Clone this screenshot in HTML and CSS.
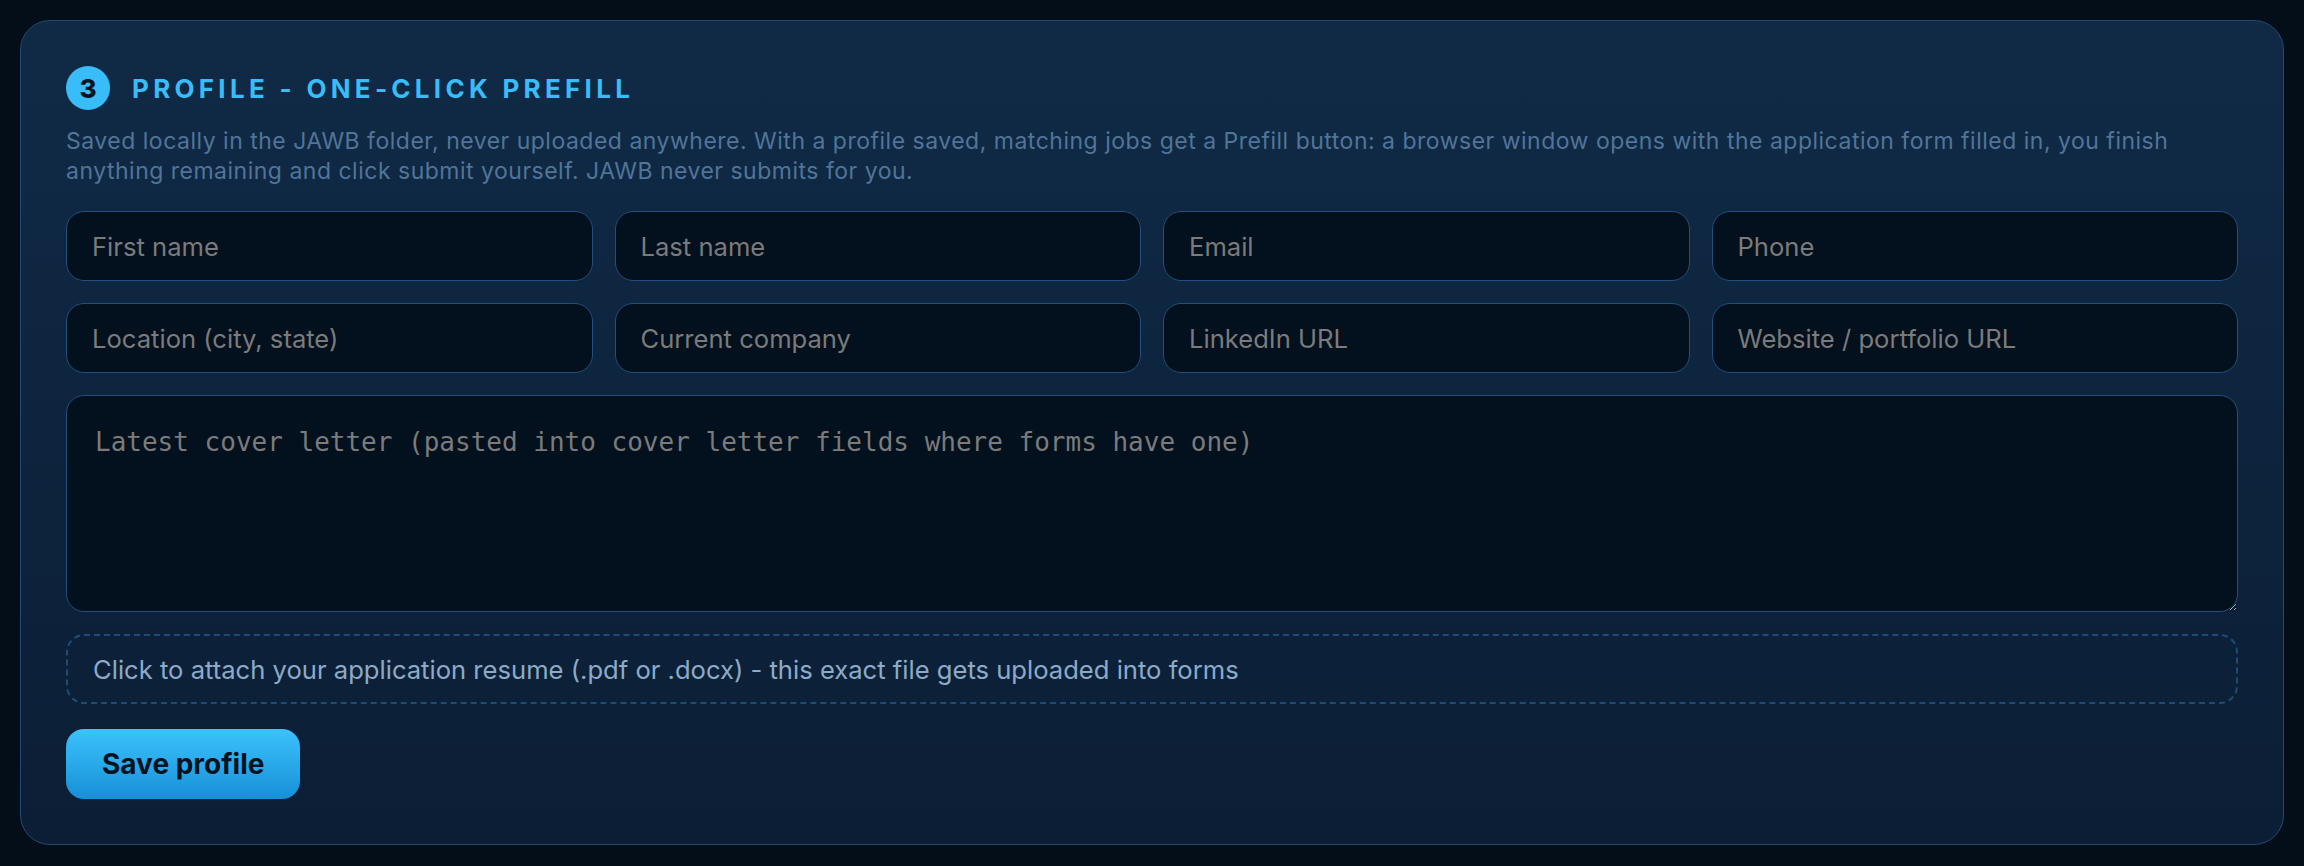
FILE: index.html
```html
<!DOCTYPE html>
<html lang="en">
<head>
    <meta charset="UTF-8">
    <meta name="viewport" content="width=device-width, initial-scale=1.0">
    <title>JAWB - Profile</title>
    <link rel="stylesheet" href="styles.css">
</head>
<body>
    <section class="card">
        <div class="card-head">
            <span class="step">3</span>
            <h2>Profile - one-click prefill</h2>
        </div>
        <p class="hint">Saved locally in the JAWB folder, never uploaded anywhere. With a profile saved, matching jobs get a Prefill button: a browser window opens with the application form filled in, you finish anything remaining and click submit yourself. JAWB never submits for you.</p>

        <form class="profile-form" onsubmit="return false;">
            <div class="fields">
                <input type="text" placeholder="First name">
                <input type="text" placeholder="Last name">
                <input type="email" placeholder="Email">
                <input type="tel" placeholder="Phone">
                <input type="text" placeholder="Location (city, state)">
                <input type="text" placeholder="Current company">
                <input type="url" placeholder="LinkedIn URL">
                <input type="url" placeholder="Website / portfolio URL">
            </div>
            <textarea placeholder="Latest cover letter (pasted into cover letter fields where forms have one)"></textarea>
            <label class="dropzone">
                <input type="file" accept=".pdf,.docx">
                Click to attach your application resume (.pdf or .docx) - this exact file gets uploaded into forms
            </label>
            <div class="actions">
                <button type="submit">Save profile</button>
            </div>
        </form>
    </section>
</body>
</html>
```

FILE: styles.css
```css
body {
    margin: 0;
    padding: 20px;
    background-color: #040e18;
    font-family: Inter, "Noto Sans", sans-serif;
}
.card {
    background: linear-gradient(180deg, #102a46 0%, #0b1e35 100%);
    border: 1px solid #214b75;
    border-radius: 30px;
    padding: 45px;
}
.card-head {
    display: flex;
    align-items: center;
    gap: 22px;
}
.step {
    width: 44px;
    height: 44px;
    border-radius: 50%;
    background-color: #38bdf8;
    color: #04121f;
    font-weight: 800;
    font-size: 26px;
    display: flex;
    align-items: center;
    justify-content: center;
}
.card-head h2 {
    margin: 0;
    color: #38bdf8;
    font-size: 26px;
    font-weight: 700;
    text-transform: uppercase;
    letter-spacing: 0.165em;
}
.hint {
    margin: 17px 0 25px;
    color: #517599;
    font-size: 23px;
    line-height: 29.5px;
    letter-spacing: 0.5px;
}
.profile-form {
    display: flex;
    flex-direction: column;
    gap: 22px;
}
.fields {
    display: grid;
    grid-template-columns: repeat(4, 1fr);
    gap: 22px;
}
input, textarea {
    box-sizing: border-box;
    background-color: #03101d;
    border: 1px solid #22507e;
    border-radius: 18px;
    color: #d0dbe6;
    outline: none;
}
input {
    height: 70px;
    padding: 0 25px;
    font-family: Inter, "Noto Sans", sans-serif;
    font-size: 25.6px;
}
textarea {
    height: 217px;
    padding: 26px 28px;
    font-family: "DejaVu Sans Mono", monospace;
    font-size: 26px;
    line-height: 1.6;
    resize: vertical;
    color-scheme: dark;
}
input::placeholder, textarea::placeholder {
    color: #7b7b7b;
}
.dropzone {
    box-sizing: border-box;
    height: 70px;
    display: flex;
    align-items: center;
    padding: 0 25px;
    border: 2px dashed #1f4b75;
    border-radius: 18px;
    color: #8cabc8;
    font-size: 25.6px;
    cursor: pointer;
}
.dropzone input {
    display: none;
}
.actions {
    margin-top: 3px;
}
button {
    height: 70px;
    padding: 0 36px;
    border: none;
    border-radius: 18px;
    background: linear-gradient(180deg, #3cc2fb 0%, #1690d8 100%);
    color: #04121f;
    font-family: Inter, "Noto Sans", sans-serif;
    font-size: 28px;
    font-weight: 700;
    cursor: pointer;
}
button:hover {
    background: linear-gradient(180deg, #52c9fb 0%, #1e98de 100%);
}
```
